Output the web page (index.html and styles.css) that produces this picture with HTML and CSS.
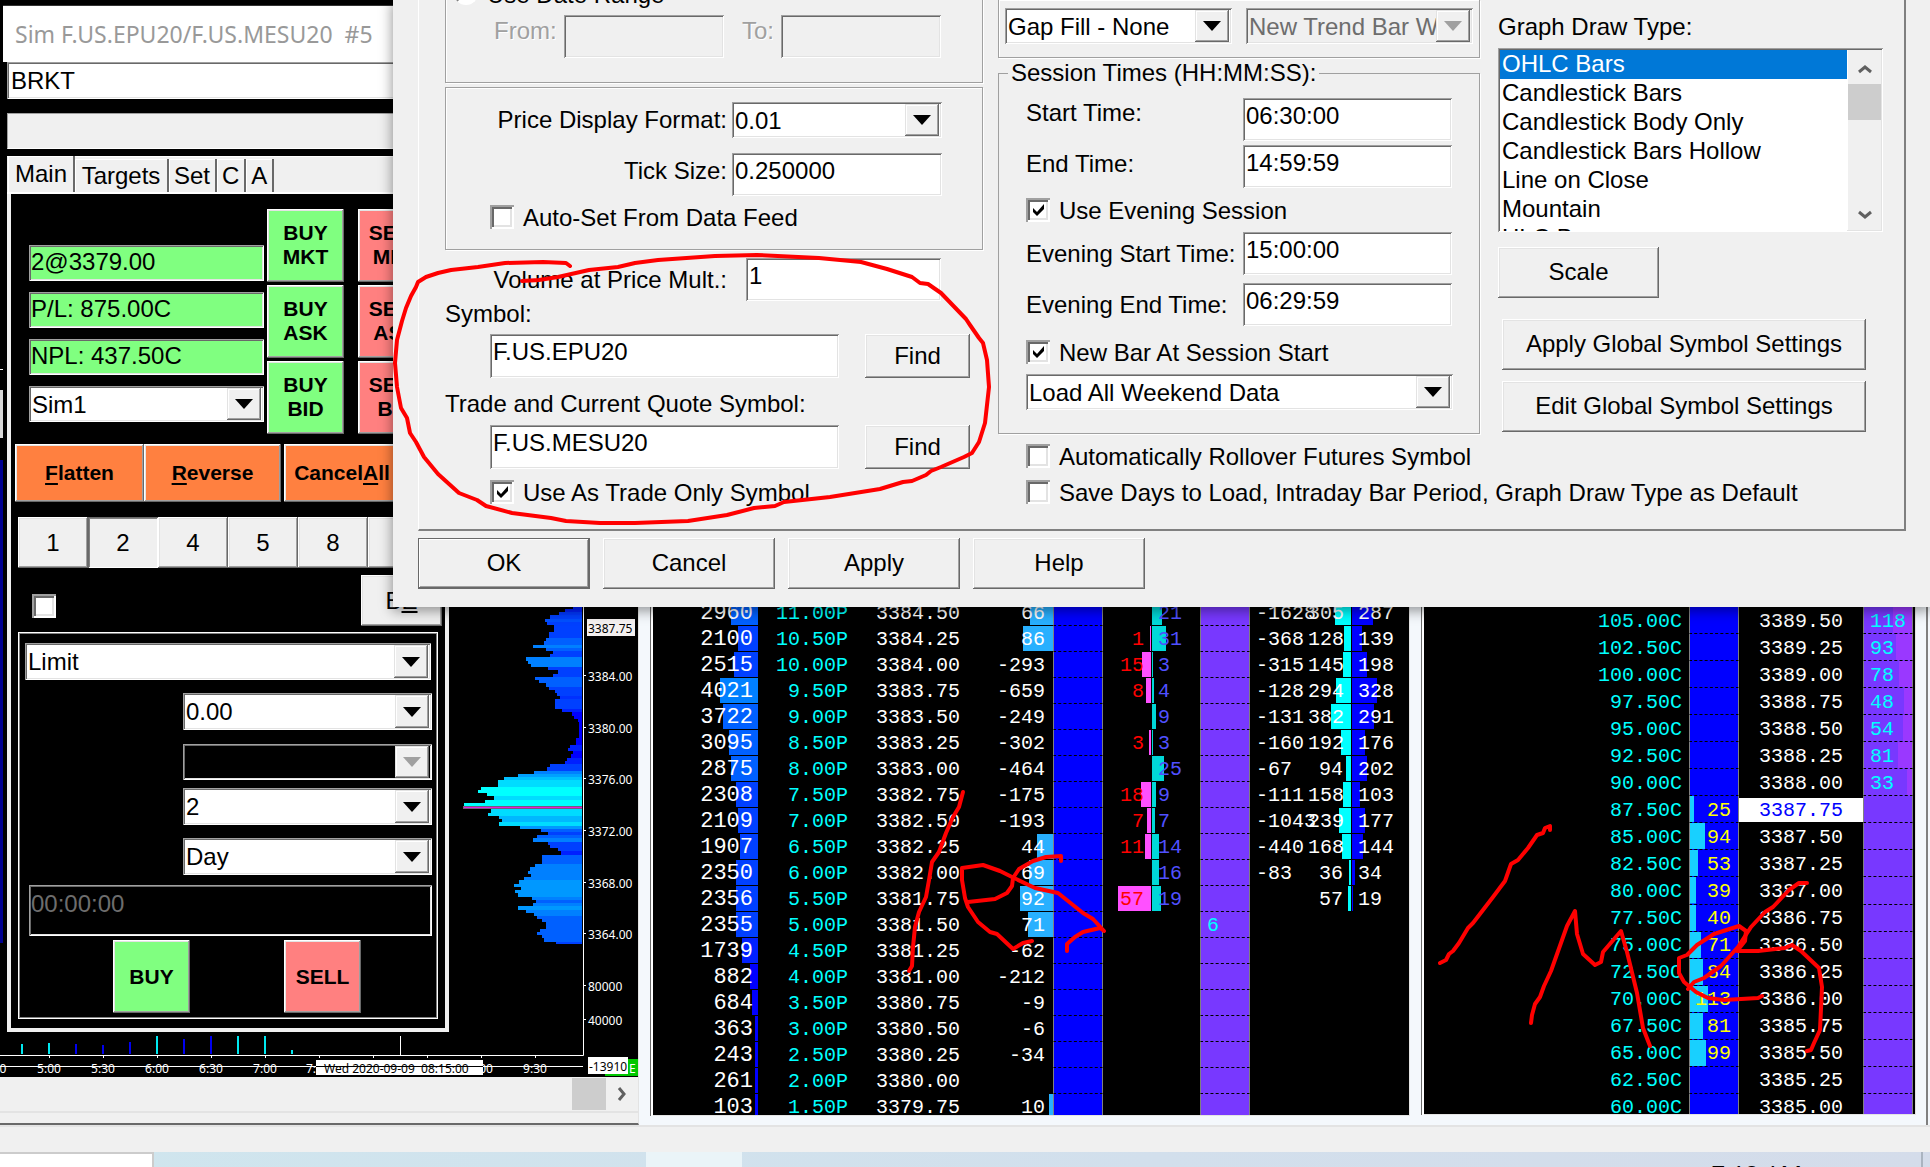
FILE: index.html
```html
<!DOCTYPE html>
<html lang="en">
<head>
<meta charset="utf-8">
<title>Chart Settings</title>
<link rel="stylesheet" href="styles.css">
</head>
<body>
<main class="workspace">
  <section class="chart-panel">
    <svg class="chart" width="638" height="1077" aria-label="Volume by price">
      <rect x="0" y="390" width="3" height="48" fill="#d8d8d8"/>
      <rect x="0" y="369" width="3" height="1" fill="#fff"/>
      <rect x="0" y="460" width="3" height="483" fill="#000090"/>
      <g id="profile"></g>
      <rect x="463" y="806" width="119" height="3" fill="#7a5a7a"/>
      <rect x="464" y="807" width="118" height="1" fill="#e020e0"/>
      <path d="M583.5 600V1055.500H0" fill="none" stroke="#fff"/>
      <path id="ticks" fill="none" stroke="#fff"/>
      <g id="histogram"></g>
      <path d="M400.500 1036V1055M0 1066.500H583" fill="none" stroke="#fff"/>
      <g class="axis-text" id="price-labels"></g>
      <g class="axis-text centered" id="time-labels"></g>
      <rect x="587" y="619" width="48" height="17" fill="#f4f0f0"/>
      <text class="axis-text dark" x="588" y="633">3387.75</text>
      <rect x="316" y="1060" width="167" height="15" fill="#fff"/>
      <text class="axis-text dark date" x="324" y="1073">Wed 2020-09-09 &#160;08:15:00</text>
      <path d="M316 1066.500H483" stroke="#000"/>
      <rect x="605" y="1059" width="33" height="17" fill="#00c800"/>
      <text class="axis-text" x="629" y="1073">E</text>
      <rect x="588" y="1057" width="40" height="17" fill="#fff"/>
      <text class="axis-text dark" x="589" y="1071">-13910</text>
    </svg>
    <div class="hscroll">
      <span class="thumb"></span>
      <button class="scroll-btn" aria-label="Scroll right"><svg width="10" height="14" viewBox="0 0 10 14"><path d="M2 1l5 6-5 6" fill="none" stroke="#606060" stroke-width="3"/></svg></button>
    </div>
  </section>
  <section class="ladder-panel near"><table class="ladder" id="ladder-a"></table></section>
  <section class="ladder-panel wide"><table class="ladder roomy" id="ladder-b"></table></section>
  <span class="edge"></span>
</main>
<div class="status-strip"></div>
<footer class="taskbar">
  <span class="search"></span><span class="task-gap"></span><span class="task-active"></span>
  <time class="clock">7:12 AM</time><span class="peek"></span>
</footer>

<section class="trade">
  <header class="trade-title">Sim F.US.EPU20/F.US.MESU20&nbsp; #5</header>
  <input class="field brkt" aria-label="Order template" value="BRKT">
  <div class="gray-bar"></div>
  <div class="tab-control">
    <nav class="tabs">
      <button class="tab on">Main</button><button class="tab targets">Targets</button><button class="tab set">Set</button><button class="tab">C</button><button class="tab">A</button>
    </nav>
    <div class="quick">
      <div class="readouts">
        <input class="field green" aria-label="Position" value="2@3379.00">
        <input class="field green" aria-label="Profit and loss" value="P/L: 875.00C">
        <input class="field green" aria-label="Net profit and loss" value="NPL: 437.50C">
        <span class="combo"><select aria-label="Account"><option>Sim1</option></select></span>
      </div>
      <div class="stack">
        <button class="btn order buy">BUY<br>MKT</button><button class="btn order buy">BUY<br>ASK</button><button class="btn order buy">BUY<br>BID</button>
      </div>
      <div class="stack sells">
        <button class="btn order sell">SELL<br>MKT</button><button class="btn order sell">SELL<br>ASK</button><button class="btn order sell">SELL<br>BID</button>
      </div>
    </div>
    <div class="flat-row">
      <button class="btn orange flatten"><u>F</u>latten</button><button class="btn orange reverse"><u>R</u>everse</button><button class="btn orange cancel-all">Cancel<u>A</u>ll</button>
    </div>
    <div class="qty-row">
      <button class="btn qty">1</button><button class="btn qty pressed">2</button><button class="btn qty">4</button><button class="btn qty">5</button><button class="btn qty">8</button><button class="btn qty" aria-label="More"></button>
    </div>
    <div class="be-row">
      <input type="checkbox" aria-label="Auto break even"><button class="btn be">B<u>E</u></button>
    </div>
    <div class="ticket">
      <span class="combo order-type"><select aria-label="Order type"><option>Limit</option></select></span>
      <span class="combo half price"><select aria-label="Price"><option>0.00</option></select></span>
      <span class="combo half dark"><select aria-label="Second price" disabled><option></option></select></span>
      <span class="combo half amount"><select aria-label="Quantity"><option>2</option></select></span>
      <span class="combo half tif"><select aria-label="Time in force"><option>Day</option></select></span>
      <input class="field time-box" aria-label="Expiry time" value="00:00:00" disabled>
      <div class="send-row"><button class="btn order buy">BUY</button><button class="btn order sell">SELL</button></div>
    </div>
  </div>
</section>

<section class="dialog" role="dialog" aria-label="Chart Settings">
  <div class="page">
    <div class="col-left">
      <div class="group dates">
        <label class="check range"><input type="radio">Use Date Range</label>
        <div class="row">
          <label class="from off" for="from">From:</label><input class="field tall short" id="from" disabled>
          <label class="to off" for="to">To:</label><input class="field tall short" id="to" disabled>
        </div>
      </div>
      <div class="group format">
        <div class="row"><label class="right" for="pdf">Price Display Format:</label><span class="combo mid"><select id="pdf"><option>0.01</option></select></span></div>
        <div class="row tick"><label class="right" for="tick">Tick Size:</label><input class="field tall mid" id="tick" value="0.250000"></div>
        <label class="check indent auto"><input type="checkbox">Auto-Set From Data Feed</label>
      </div>
      <div class="row volume"><label class="right" for="vol">Volume at Price Mult.:</label><input class="field tall" id="vol" value="1"></div>
      <label class="caption" for="sym">Symbol:</label>
      <div class="row symbol"><input class="field tall" id="sym" value="F.US.EPU20"><button class="btn">Find</button></div>
      <label class="caption second" for="tsym">Trade and Current Quote Symbol:</label>
      <div class="row symbol later"><input class="field tall" id="tsym" value="F.US.MESU20"><button class="btn">Find</button></div>
      <label class="check indent only"><input type="checkbox" checked>Use As Trade Only Symbol</label>
    </div>
    <div class="col-mid">
      <div class="group gaps">
        <span class="combo"><select aria-label="Gap fill"><option>Gap Fill - None</option></select></span>
        <span class="combo off"><select aria-label="New trend bar" disabled><option>New Trend Bar When</option></select></span>
      </div>
      <fieldset class="session">
        <legend>Session Times (HH:MM:SS):</legend>
        <div class="row"><label class="high" for="st">Start Time:</label><input class="field tall" id="st" value="06:30:00"></div>
        <div class="row gap4"><label class="raised" for="et">End Time:</label><input class="field tall" id="et" value="14:59:59"></div>
        <label class="check gap10"><input type="checkbox" checked>Use Evening Session</label>
        <div class="row gap10"><label for="es">Evening Start Time:</label><input class="field tall" id="es" value="15:00:00"></div>
        <div class="row gap8"><label for="ee">Evening End Time:</label><input class="field tall" id="ee" value="06:29:59"></div>
        <label class="check gap14"><input type="checkbox" checked>New Bar At Session Start</label>
        <span class="combo gap10"><select aria-label="Weekend data"><option>Load All Weekend Data</option></select></span>
      </fieldset>
      <label class="check below gap10"><input type="checkbox">Automatically Rollover Futures Symbol</label>
      <label class="check below gap12"><input type="checkbox">Save Days to Load, Intraday Bar Period, Graph Draw Type as Default</label>
    </div>
    <div class="col-right">
      <label class="caption" for="draw">Graph Draw Type:</label>
      <div class="listbox">
        <select id="draw" size="7">
          <option selected>OHLC Bars</option><option>Candlestick Bars</option><option>Candlestick Body Only</option><option>Candlestick Bars Hollow</option><option>Line on Close</option><option>Mountain</option><option>HLC Bars</option>
        </select>
        <div class="vscroll">
          <button class="scroll-btn" aria-label="Up"><svg width="14" height="10" viewBox="0 0 14 10"><path d="M1 8l6-5 6 5" fill="none" stroke="#606060" stroke-width="3"/></svg></button>
          <span class="thumb"></span>
          <button class="scroll-btn last" aria-label="Down"><svg width="14" height="10" viewBox="0 0 14 10"><path d="M1 2l6 5 6-5" fill="none" stroke="#606060" stroke-width="3"/></svg></button>
        </div>
      </div>
      <button class="btn scale">Scale</button>
      <button class="btn global">Apply Global Symbol Settings</button>
      <button class="btn global next">Edit Global Symbol Settings</button>
    </div>
  </div>
  <div class="actions">
    <button class="btn default">OK</button><button class="btn">Cancel</button><button class="btn">Apply</button><button class="btn">Help</button>
  </div>
</section>

<svg class="ink" width="1930" height="1167" aria-hidden="true">
  <path d="M570 266L566 263 543 262 505 263 478 267 451 270 438 273 426 277 418 282 416 287 411 296 406 308 402 321 397 340 395 363 397 387 401 408 407 418 410 433 416 442 424 457 438 474 459 493 477 500 486 506 512 513 551 518 566 521 600 523 635 523 688 521 727 515 754 508 775 506 784 502 830 497 880 489 903 482 912 481 926 475 931 471 941 467 964 457 972 453 979 442 985 423 989 387 987 360 983 343 979 338 970 325 966 319 941 293 928 284 920 283 912 277 887 269 861 262 819 258 757 255 715 256 658 260 635 263 618 267 589 270 558 277 539 280 522 281"/>
  <path d="M963 792L959 807 953 817 946 833 939 852 932 862 929 880 926 897 919 912 915 927 913 947 912 966 909 971"/>
  <path d="M1061 861L1061 856 1046 857 1033 861 1019 869 1013 878 1012 886 1007 893 995 899 968 902"/>
  <path d="M1032 941L1023 943 1013 949 997 934 990 932 978 922 968 907 965 898 962 880 962 868 983 865 1000 871 1012 877 1035 888 1058 893 1083 913 1093 919 1104 931 1100 928 1083 932 1075 937 1067 944 1067 951"/>
  <path d="M1440 963L1446 960 1449 954 1453 951 1459 943 1468 928 1473 923 1483 910 1493 897 1505 881 1511 864 1518 860 1528 848 1537 835 1543 833 1545 828 1550 826 1550 830"/>
  <path d="M1531 1023L1532 1015 1535 1004 1540 997 1544 986 1551 971 1567 926 1575 911 1577 934 1583 954 1595 965 1601 962 1603 952 1621 931 1627 952 1637 993 1643 1028 1650 1046"/>
  <path d="M1807 883L1799 883 1789 890 1773 907 1765 912 1751 927 1738 947 1721 966 1704 978 1694 982 1688 989"/>
  <path d="M1762 996L1758 998 1724 1000 1708 998 1696 992 1684 982 1679 973 1679 958 1687 955 1697 945 1714 934 1739 926 1746 931 1745 941 1737 951 1758 951 1785 948 1792 945 1801 951 1819 968 1822 987 1820 1030 1814 1043 1811 1050 1807 1051"/>
</svg>
<script src="script.js"></script>
</body>
</html>
```
FILE: styles.css
```css
* { box-sizing: border-box; }
body {
  margin: 0;
  height: 100vh;
  display: flex;
  flex-direction: column;
  overflow: hidden;
  position: relative;
  background: #f0f0f0;
  font: 24px/28px "Liberation Sans", Arial, sans-serif;
  color: #000;
}
button, input, select { font: inherit; color: inherit; margin: 0; padding: 0; border: 0; border-radius: 0; min-width: 0; }
button { white-space: nowrap; }

/* workspace */
.workspace { flex: 1; min-height: 0; display: flex; background: #f4f8fc; border-bottom: 2px solid #e3e3e3; }
.status-strip { height: 25px; background: #f0f0f0; }
.chart-panel { width: 639px; flex: none; display: flex; flex-direction: column; overflow: hidden; background: #f0f0f0; border-bottom: 2px solid #696969; border-right: 1px solid #e3e3e3; }
.chart { display: block; flex: none; background: #000; }
.axis-text { font: 12px "Noto Sans", sans-serif; fill: #fff; }
.axis-text.dark { fill: #000; }
.axis-text.centered text { text-anchor: middle; }
.hscroll { display: flex; justify-content: flex-end; height: 36px; border-bottom: 2px solid #e3e3e3; }
.hscroll .thumb { width: 34px; margin: 1px 0; background: #cdcdcd; }
.hscroll .scroll-btn { width: 32px; }
.scroll-btn { background: #f0f0f0; display: flex; align-items: center; justify-content: center; }
.ladder-panel { overflow: hidden; background: #000; padding-top: 600px; border-bottom: 1px solid #e3e3e3; border-right: 1px solid #e3e3e3; box-shadow: -2px 0 #fff, -3px 0 #696969; margin-bottom: 9px; }
.near { width: 757px; flex: none; margin-left: 14px; }
.wide { flex: 1; margin: 0 10px 10px 14px; padding-top: 607px; }
.edge { width: 4px; border-left: 2px solid #808080; }

/* ladders */
.ladder { border-collapse: separate; border-spacing: 0; table-layout: fixed; width: 756px; height: 518px; font: 20px/22px "Liberation Mono", monospace; color: #fff; }
.ladder.roomy { width: 100%; height: 514px; }
.ladder td {
  padding: 3px 5px 0; height: 25px; text-align: right; white-space: nowrap; border-bottom: 1px dashed #000;
  background: linear-gradient(var(--c, transparent), var(--c, transparent)) right / var(--w, 0) 100% no-repeat;
}
.ladder td.vol { font-size: 22px; }
.ladder td.strike { color: #0ff; }
.ladder td.delta { padding-right: 8px; --c: #28b0ff; }
.ladder td.own { background-color: #00f; border-left: 1px solid #808080; border-right: 1px solid #808080; }
.ladder td.bid { padding-right: 7px; color: #f00; --c: #ff50ff; }
.ladder td.ask { padding-left: 7px; text-align: left; color: #5050ff; --c: #00d8d8; background-position: 1px 0; }
.ladder td.purple { padding-left: 6px; text-align: left; color: #0ff; background-color: #7838ff; border-left: 1px solid #808080; border-right: 1px solid #808080; --c: #9a38ff; }
.ladder td.net { padding-left: 6px; text-align: left; }
.ladder td.vbid { padding-right: 8px; --c: #0ff; }
.ladder td.vask { padding-left: 7px; text-align: left; --c: #00f; background-position: 1px 0; }
.ladder.roomy td.strike, .ladder.roomy td.own { padding-right: 7px; }
.ladder.roomy td.own { color: #ff0; --c: #18d0ff; background-position: left; }
.ladder.roomy td.price { padding-right: 20px; }
.ladder.roomy td.last { background: #fff; color: #00f; border-bottom-style: solid; box-shadow: inset 0 2px #000; }

/* taskbar */
.taskbar { height: 15px; flex: none; display: flex; overflow: hidden; background: linear-gradient(90deg, #cfe6ee, #d2dfec 60%, #d4dcea); }
.search { width: 154px; background: #fff; border-top: 2px solid #ccc; border-right: 2px solid #ccc; }
.task-gap { width: 492px; }
.task-active { width: 96px; background: #eaf4f8; }
.clock { margin: 8px 119px 0 auto; font: 24px/28px "Open Sans", sans-serif; }
.peek { width: 9px; border-left: 2px solid #aab4c0; }

/* classic controls */
.btn {
  background: #f0f0f0; text-align: center;
  box-shadow: inset -1px -1px #696969, inset 1px 1px #fff, inset -2px -2px #a0a0a0, inset 2px 2px #e3e3e3;
}
.btn.default { box-shadow: inset 0 0 0 1px #696969, inset -2px -2px #696969, inset 2px 2px #fff, inset -3px -3px #a0a0a0; }
.field, .combo {
  background: #fff;
  box-shadow: inset 1px 1px #a0a0a0, inset -1px -1px #fff, inset 2px 2px #696969, inset -2px -2px #e3e3e3;
}
.field { height: 36px; padding: 0 2px 2px; }
.field.tall { height: 43px; padding: 0 3px 7px; }
.field.tall:disabled { background: #f0f0f0; }
.combo { display: flex; height: 36px; padding: 2px 3px 2px 2px; }
.combo select { appearance: none; flex: 1 1 0; width: 0; background: transparent; padding: 1px 0 0 1px; opacity: 1; outline: 0; text-overflow: clip; overflow: hidden; }
.combo::after {
  content: ""; width: 34px; flex: none;
  background: #f0f0f0 url("data:image/svg+xml,%3Csvg xmlns='http://www.w3.org/2000/svg' width='18' height='10'%3E%3Cpath d='M0 0h18L9 10z'/%3E%3C/svg%3E") 8px 50% no-repeat;
  box-shadow: inset -1px -1px #696969, inset 1px 1px #e3e3e3, inset -2px -2px #a0a0a0, inset 2px 2px #fff;
}
.combo.off { background: #f0f0f0; color: #6d6d6d; }
.combo.off::after, .combo.dark::after { background-image: url("data:image/svg+xml,%3Csvg xmlns='http://www.w3.org/2000/svg' width='18' height='10'%3E%3Cpath d='M0 0h18L9 10z' fill='%23a0a0a0'/%3E%3C/svg%3E"); }
.combo.dark { background: #000; }
input[type=checkbox] {
  appearance: none; width: 24px; height: 24px; flex: none; background: #fff;
  box-shadow: inset 2px 2px #a0a0a0, inset -2px -2px #fff, inset 4px 4px #696969, inset -4px -4px #e3e3e3;
}
input[type=checkbox]:checked { background: #fff url("data:image/svg+xml,%3Csvg xmlns='http://www.w3.org/2000/svg' width='24' height='24'%3E%3Cpath d='M7 10l4 4 7-8v5l-7 7-4-4z'/%3E%3C/svg%3E") center no-repeat; }
input[type=radio] { appearance: none; width: 24px; height: 24px; border-radius: 50%; border: 2px solid; border-color: #808080 #fff #fff #808080; background: #fff; }
.check { display: flex; align-items: flex-start; gap: 9px; height: 24px; line-height: 26px; white-space: nowrap; }
.row { display: flex; align-items: center; }

/* trade window */
.trade { position: absolute; left: 3px; top: 5px; width: 446px; background: #000; padding-left: 4px; display: flex; flex-direction: column; }
.trade-title { height: 57px; margin-left: -4px; border-top: 1px solid #333; background: #fff; color: #999; font: 23px/56px "Noto Sans", sans-serif; padding-left: 12px; white-space: nowrap; }
.brkt { height: 37px; padding: 0 4px; }
.gray-bar { height: 36px; margin: 14px 0 7px; background: #f0f0f0; border: 1px solid #a0a0a0; border-color: #a0a0a0 #fff #fff #a0a0a0; }
.tab-control { border: solid #f0f0f0; border-width: 0 4px 4px; }
.tabs { height: 38px; margin: 0 -4px; padding-left: 1px; background: #f0f0f0; display: flex; align-items: flex-end; border-top: 1px solid #fff; border-bottom: 2px solid #fff; }
.tab { height: 33px; padding: 0 5px; background: #f0f0f0; border-right: 2px solid #696969; box-shadow: inset 1px 1px #fff; }
.tab.on { height: 36px; width: 67px; padding: 0 5px 1px 6px; }
.tab.targets { width: 94px; }
.tab.set { width: 48px; }
.quick { display: flex; padding: 15px 0 0 18px; }
.readouts { width: 235px; margin: 36px 3px 0 0; display: flex; flex-direction: column; gap: 11px; }
.green { background: #80ff80; }
.stack { width: 77px; display: flex; flex-direction: column; gap: 3px; }
.sells { margin-left: 14px; width: 75px; }
.order { height: 73px; width: 77px; font-weight: bold; font-size: 21px; line-height: 24px; }
.stack .order { width: 100%; padding-bottom: 2px; }
.buy { background: #80ff80; }
.sell { background: #ff8080; }
.flat-row { display: flex; padding: 10px 0 0 4px; }
.orange { height: 58px; background: #ff8040; font-weight: bold; font-size: 21px; }
.orange u { text-underline-offset: 3px; }
.flatten { width: 129px; }
.reverse { width: 137px; }
.cancel-all { width: 116px; margin-left: 3px; }
.qty-row { display: flex; padding: 15px 0 0 7px; }
.qty { width: 70px; height: 51px; }
.pressed { box-shadow: inset 1px 1px #696969, inset -1px -1px #fff, inset 2px 2px #808080; }
.be-row { display: flex; justify-content: space-between; align-items: flex-end; padding: 7px 3px 0 21px; }
.be-row input { margin-bottom: 8px; }
.be { width: 81px; height: 51px; }
.ticket { margin: 6px 0 9px 7px; width: 420px; height: 387px; padding: 10px 5px 0 5px; border: 1px solid #fff; box-shadow: inset 0 0 0 1px #808080; display: flex; flex-direction: column; align-items: flex-end; }
.order-type { width: 406px; margin-right: 1px; height: 37px; }
.half { width: 249px; }
.price.combo { height: 37px; margin-top: 13px; }
.dark.combo { margin-top: 14px; }
.amount.combo { height: 37px; margin-top: 8px; }
.tif.combo { height: 37px; margin-top: 13px; }
.time-box { width: 403px; height: 51px; margin-top: 10px; padding-bottom: 14px; background: #000; color: #6d6d6d; }
.send-row { display: flex; gap: 94px; margin: 4px 71px 0 0; }

/* settings dialog */
.dialog { position: absolute; left: 393px; right: 0; top: 0; height: 607px; background: #f0f0f0; box-shadow: 0 3px 12px 1px rgba(0, 0, 0, .4); }
.page { margin: 0 24px 0 25px; height: 531px; display: flex; padding-left: 26px; border-left: 1px solid #fff; border-right: 2px solid #808080; border-bottom: 2px solid #808080; }
.group { border: 1px solid #a0a0a0; box-shadow: 1px 1px #fff, inset 1px 1px #fff; }
.col-left { width: 538px; margin: -20px 15px 0 0; flex: none; }
.dates { height: 103px; }
.range { height: 28px; padding-left: 8px; line-height: 28px; }
.dates .row { padding: 6px 0 0 48px; }
.off { color: #a0a0a0; text-shadow: 1px 1px #fff; }
.from { width: 70px; padding-bottom: 12px; }
.to { width: 39px; margin-left: 18px; padding-bottom: 12px; }
.short { width: 160px; }
.format { height: 163px; margin-top: 4px; padding-top: 14px; }
.right { width: 281px; margin-right: 5px; text-align: right; }
.mid { width: 210px; }
.tick { margin-top: 15px; }
.tick .right { padding-bottom: 8px; }
.auto { margin-top: 9px; }
.indent { margin-left: 45px; }
.format .indent { margin-left: 44px; }
.volume { margin-top: 8px; }
.volume .right { width: 282px; margin-right: 19px; }
.volume input { width: 195px; }
.caption { display: block; line-height: 25px; }
.symbol { margin: 8px 0 0 45px; }
.symbol input.tall { width: 349px; height: 44px; margin-right: 26px; padding-bottom: 8px; }
.symbol .btn { width: 105px; height: 44px; }
.second { margin-top: 13px; }
.later { margin-top: 9px; }
.only { margin-top: 11px; }
.col-mid { width: 482px; margin-right: 18px; flex: none; }
.gaps { height: 58px; border-top: 0; padding: 8px 6px 0 6px; display: flex; gap: 14px; }
.gaps .combo { flex: 1 1 0; min-width: 0; }
.session { margin: 1px 0 0; padding: 11px 26px 23px 27px; border: 1px solid #a0a0a0; box-shadow: 1px 1px #fff; }
.session legend { margin-left: -18px; padding: 0 3px; background: #f0f0f0; }
.session .row label { width: 217px; }
.session .row .field { width: 209px; }
.session .row .high { align-self: flex-start; padding-top: 1px; }
.session .row .raised { padding-bottom: 5px; }
.gap4 { margin-top: 4px; }
.gap8 { margin-top: 8px; }
.gap10 { margin-top: 10px; }
.gap12 { margin-top: 12px; }
.gap14 { margin-top: 14px; }
.below { margin-left: 28px; }
.col-right { flex: 1; padding: 14px 21px 0 0; min-width: 0; }
.listbox { display: flex; height: 184px; margin-top: 9px; padding: 2px; background: #fff; box-shadow: inset 1px 1px #a0a0a0, inset -1px -1px #fff, inset 2px 2px #696969, inset -2px -2px #e3e3e3; overflow: hidden; }
.listbox select { flex: 1; height: 181px; overflow: hidden; background: #fff; outline: 0; }
.listbox option { height: 29px; min-height: 29px; padding: 0 2px; line-height: 29px; }
.listbox option:checked { background: linear-gradient(#0078d7, #0078d7); -webkit-text-fill-color: #fff; }
.vscroll { width: 33px; display: flex; flex-direction: column; background: #f0f0f0; margin-left: 1px; }
.vscroll .scroll-btn { height: 34px; padding-top: 3px; }
.vscroll .thumb { height: 36px; background: #cdcdcd; }
.vscroll .last { margin-top: auto; }
.col-right .btn { display: block; height: 51px; padding-bottom: 1px; }
.col-right .scale { width: 161px; margin-top: 15px; }
.col-right .global { width: 364px; margin: 21px 0 0 4px; }
.col-right .next { margin-top: 11px; }
.actions { display: flex; gap: 13px; padding: 7px 0 0 25px; }
.actions .btn { width: 172px; height: 51px; padding-bottom: 1px; }

.ink { position: absolute; left: 0; top: 0; pointer-events: none; fill: none; stroke: #f00; stroke-width: 4; stroke-linecap: round; stroke-linejoin: round; }
```
FILE: script.js
```js
const SVG = "http://www.w3.org/2000/svg";

function add(parent, tag, attrs, text) {
  const node = document.createElementNS(SVG, tag);
  for (const key in attrs) node.setAttribute(key, attrs[key]);
  if (text) node.textContent = text;
  document.getElementById(parent).appendChild(node);
}

// Volume profile: top edge of each step, bar width, green channel of its blue
const profile = [
  [600,9,32],[609,17,32],[612,23,56],[615,32,64],[619,37,80],[622,35,64],[625,28,64],[632,33,64],[638,36,96],[641,38,96],
  [645,49,128],[648,36,96],[651,29,64],[654,32,64],[657,56,128],[661,54,128],[664,51,128],[667,34,64],[670,24,64],[674,29,64],
  [677,47,96],[680,43,96],[683,36,96],[687,33,64],[690,27,64],[693,25,64],[696,22,48],[699,27,64],[709,20,32],[712,10,0],
  [716,8,0],[719,4,0],[722,3,0],[738,6,0],[745,12,32],[748,14,32],[751,9,0],[754,11,0],[758,15,32],[761,17,32],
  [764,32,64],[767,35,64],[771,48,128],[774,64,160],[777,78,192],[780,84,220],[787,101,255],[790,104,255],[793,95,255],[796,88,220],
  [800,97,255],[803,118,255],[809,91,220],[813,94,220],[816,83,184],[819,80,184],[822,83,220],[826,62,152],[829,41,96],[832,34,64],
  [835,45,96],[838,49,128],[842,34,64],[845,32,64],[848,24,64],[851,21,32],[855,40,96],[864,47,128],[867,52,128],[871,54,128],
  [874,51,128],[877,58,128],[880,63,152],[884,68,152],[887,61,152],[890,67,152],[893,64,152],[897,50,128],[900,46,96],[903,49,128],
  [906,64,152],[910,56,128],[913,48,128],[916,45,96],[919,40,96],[922,36,96],[929,42,96],[932,45,96],[935,40,96],[938,38,96],[942,26,64],[944,0,0]
];
profile.slice(0, -1).forEach(([y, w, g], i) =>
  add("profile", "rect", { x: 582 - w, y, width: w, height: profile[i + 1][0] - y, fill: `rgb(0,${g},255)` }));

[[22,1044,1],[49,1043,1],[76,1044,0],[103,1045,0],[130,1042,0],[157,1036,1],[184,1039,0],[211,1036,0],[238,1036,1],[265,1036,1],[292,1050,1]]
  .forEach(([x, y, up]) => add("histogram", "rect", { x: x - 1, y, width: 2, height: 1054 - y, fill: up ? "#00e8f0" : "#0000f0" }));

let marks = "";
for (let x = 49; x < 583; x += 54) marks += `M${x}.5 1055v3`;
[["3384.00",677],["3380.00",729],["3376.00",780],["3372.00",832],["3368.00",884],["3364.00",935],["80000",987],["40000",1021]]
  .forEach(([t, y]) => { marks += `M583 ${y - 2}.5h3`; add("price-labels", "text", { x: 588, y: y + 4 }, t); });
document.getElementById("ticks").setAttribute("d", marks);
[["0",3],["5:00",49],["5:30",103],["6:00",157],["6:30",211],["7:00",265],["7:",311],["00",486],["9:30",535]]
  .forEach(([t, x]) => add("time-labels", "text", { x, y: 1073 }, t));

// A cell is either plain text or [text, bar width, bar colour]
function build(id, names, widths, rows) {
  const cols = widths.map(w => w ? `<col style="width:${w}px">` : "<col>").join("");
  const body = rows.map(row => "<tr>" + names.map((name, i) => {
    const [text, w, c] = [].concat(row[i] ?? "");
    const bar = w ? ` style="--w:${w}px${c ? ";--c:" + c : ""}"` : "";
    return `<td class="${name}"${bar}>${text ?? ""}</td>`;
  }).join("") + "</tr>").join("");
  document.getElementById(id).innerHTML = `<colgroup>${cols}</colgroup><tbody>${body}</tbody>`;
}

const B = ["#0000ff", "#0020ff", "#0040ff", "#0060ff", "#0080ff"];
const volumes = [[2960,27,3],[2100,20,2],[2515,24,2],[4021,38,4],[3722,35,3],[3095,29,3],[2875,27,3],[2308,22,2],[2109,20,2],[1907,18,2],
  [2350,22,2],[2356,22,2],[2355,22,2],[1739,16,1],[882,8,0],[684,6,0],[363,3,0],[243,3,0],[261,3,0],[103,3,0]];
const deltas = [[66,23],[86,30],-293,-659,-249,-302,-464,-175,-193,[44,16],[69,24],[92,33],[71,25],-62,-212,-9,-6,-34,"",[10,4]];
const bids = ["",[1,1],[15,9],[8,5],"",[3,2],"",[18,10],[7,4],[11,6],"",[57,33]];
const asks = [[21,10],[31,14],[3,1],[4,2],[9,4],[3,1],[25,12],[9,4],[7,3],[14,7],[16,7],[19,9]];
const nets = [-1628,-368,-315,-128,-131,-160,-67,-111,-1043,-440,-83];
const vbids = [[305,16],[128,7],[145,8],[294,15],[382,20],[192,10],[94,5],[158,8],[239,12],[168,9],[36,2],[57,3]];
const vasks = [[287,21],[139,10],[198,15],[328,25],[291,22],[176,13],[202,15],[103,8],[177,13],[144,11],[34,3],[19,1]];
build("ladder-a",
  ["vol", "strike", "price", "delta", "own", "bid", "ask", "purple", "net", "vbid", "vask"],
  [105, 95, 112, 88, 50, 48, 49, 50, 53, 48, 58],
  volumes.map(([v, w, b], i) => [[v, w, B[b]], (11 - i / 2).toFixed(2) + "P", (3384.5 - i / 4).toFixed(2), deltas[i], "",
    bids[i], asks[i], i === 12 ? "6" : "", nets[i], vbids[i], vasks[i]]));

const own = ["","","","","","","",[25,4],[94,15],[53,8],[39,6],[40,6],[71,11],[84,13],[113,18],[81,13],[99,16],"",""];
const resting = [[118,19],[93,16],[78,13],[48,8],[54,9],[81,14],[33,5]];
build("ladder-b", ["strike", "own", "price", "purple", "pad"], [0, 50, 124, 50, 2],
  own.map((o, i) => [(105 - i * 2.5).toFixed(2) + "C", o, (3389.5 - i / 4).toFixed(2), resting[i], ""]));
document.querySelectorAll("#ladder-b .price")[7].classList.add("last");
```
